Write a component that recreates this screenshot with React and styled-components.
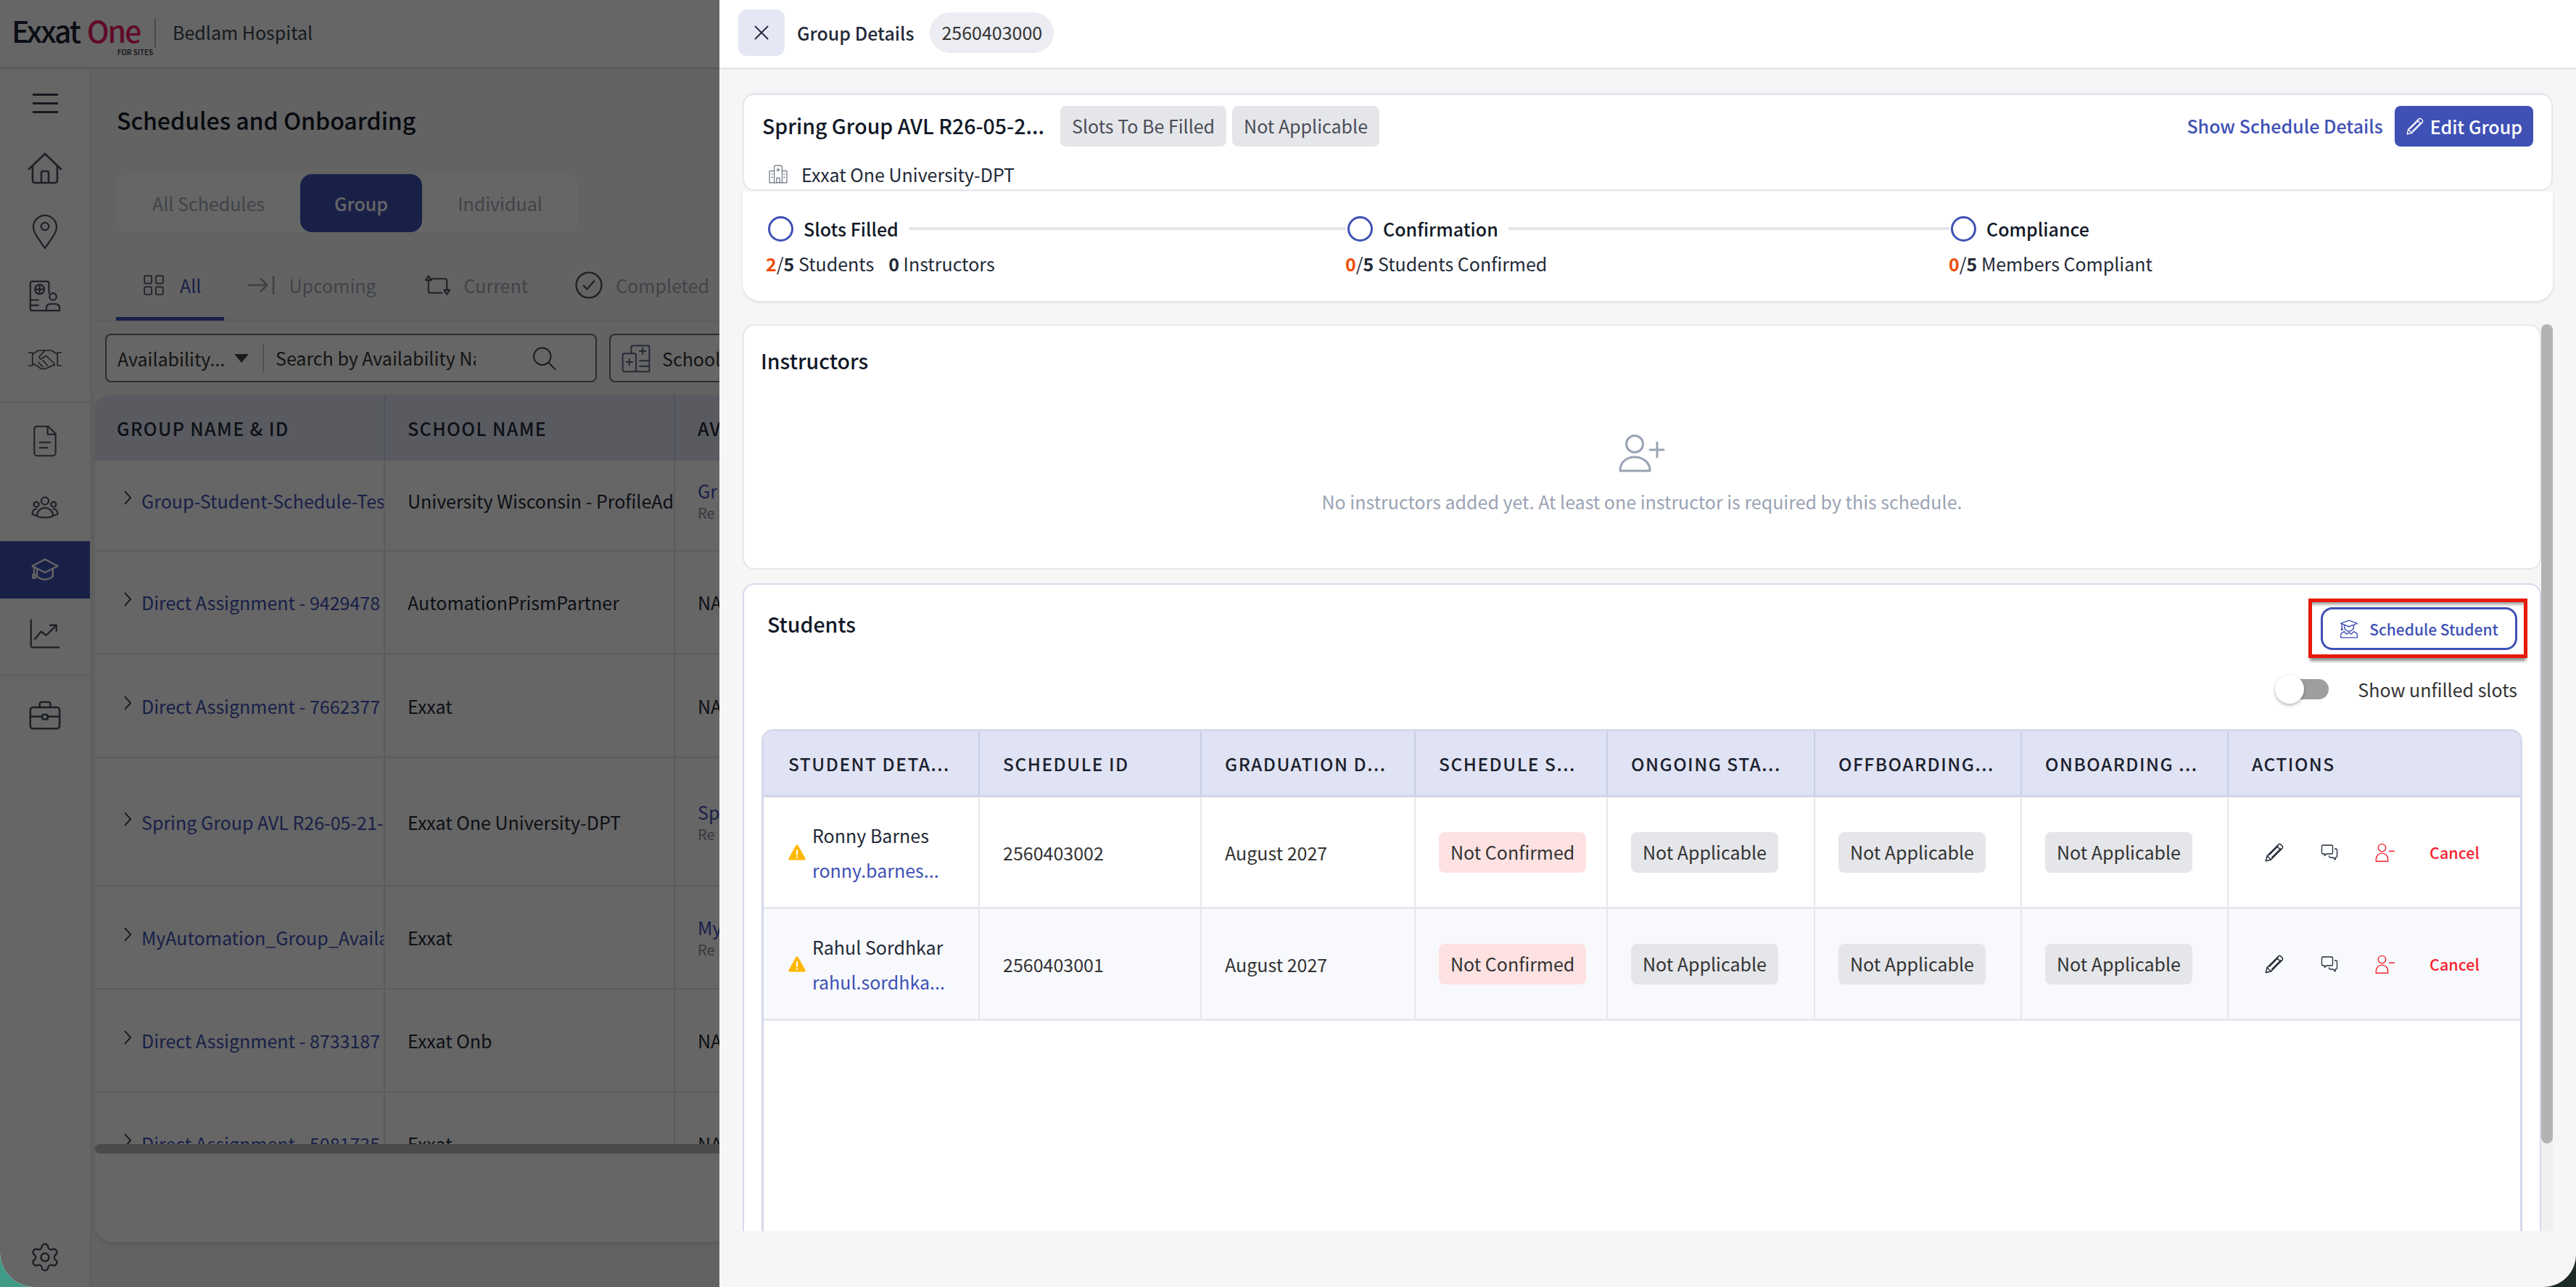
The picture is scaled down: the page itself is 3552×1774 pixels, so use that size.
import styled, { createGlobalStyle } from "styled-components";
import { X, Settings } from "lucide-react";

const font = `"Noto Sans CJK SC", "Source Sans Pro", "Noto Sans", sans-serif`;

const GlobalStyle = createGlobalStyle`
  html, body {
    margin: 0;
    padding: 0;
    background: linear-gradient(to right, #3f9a88 50%, #1c2a28 50%);
    font-family: ${font};
  }
  * { box-sizing: border-box; }
`;

const Line = ({ size = 48, h, vb = "0 0 24 24", color = "currentColor", sw = 1.4, fill = "none", children }) => (
  <svg width={size} height={h || size} viewBox={vb} fill={fill} stroke={color} strokeWidth={sw} strokeLinecap="round" strokeLinejoin="round">
    {children}
  </svg>
);

const HomeIcon = () => (
  <Line h={44} vb="0 0 24 22" sw={1.3}>
    <path d="M12 1 1 11.500M12 1l11 10.500" />
    <path d="M3.500 9.500V19.500a1.500 1.500 0 0 0 1.500 1.500h14a1.500 1.500 0 0 0 1.500-1.500V9.500" />
    <path d="M9.500 21v-7a1 1 0 0 1 1-1h3a1 1 0 0 1 1 1v7" />
  </Line>
);
const PinIcon = () => (
  <Line size={36} h={48} vb="0 0 18 24" sw={1.1}>
    <path d="M9 23C4 16 1 12 1 8.500a8 8 0 0 1 16 0C17 12 14 16 9 23z" />
    <circle cx="9" cy="8" r="2.600" />
  </Line>
);
const ClipboardIcon = () => (
  <Line h={44} sw={1.2}>
    <path d="M15 10V2.500A1.500 1.500 0 0 0 13.500 1H2.500A1.500 1.500 0 0 0 1 2.500v19A1.500 1.500 0 0 0 2.500 23H13" />
    <path d="M8 4.500v5M5.500 7h5" />
    <circle cx="8" cy="7" r="3.500" />
    <path d="M1 15h6M1 19h6" />
    <circle cx="18" cy="12.500" r="2.600" />
    <path d="M13 23v-2a3 3 0 0 1 3-3h4a3 3 0 0 1 3 3v2z" />
  </Line>
);
const HandshakeIcon = () => (
  <Line h={30} vb="0 0 32 20" sw={1.1}>
    <path d="M1 4h3.500v12H1M31 4h-3.500v12H31" />
    <path d="M4.500 5.500 10 2h6l-5.500 6 1.500 2 5-3 7.500 7v2M27.500 5.500 22 2h-6" />
    <path d="M4.500 14l4 2 4 3h3l3-1 5-2.500M10 13l4 4M14 11l4.500 5" />
  </Line>
);
const DocIcon = () => (
  <Line size={40} h={44} vb="0 0 20 24" sw={1.1}>
    <path d="M3.500 1h9L18 6.500V21a2 2 0 0 1-2 2H4a2 2 0 0 1-2-2V3a2 2 0 0 1 1.500-2z" />
    <path d="M12 1v6h6M6 13h8M6 17h6" />
  </Line>
);
const PeopleIcon = () => (
  <Line h={38} sw={1.4}>
    <circle cx="12" cy="6" r="3.200" />
    <circle cx="4.500" cy="9" r="2.200" />
    <circle cx="19.500" cy="9" r="2.200" />
    <path d="M5 19c0-4 3-7 7-7s7 3 7 7c-2 2-12 2-14 0z" />
    <path d="M4.500 13C2 13 1 15 1 17c0 1 2 1.500 4 1.500M19.500 13c2.500 0 3.500 2 3.500 4 0 1-2 1.500-4 1.500" />
  </Line>
);
const CapIcon = () => (
  <Line size={46} h={40} sw={1.4}>
    <path d="M12 3 1.500 8.500 12 14l10.500-5.500z" />
    <path d="M5.500 11v6c3 3.500 10 3.500 13 0v-6" />
    <path d="M3 9.500V15M2 15.500h2v3H2z" />
  </Line>
);
const ChartIcon = () => (
  <Line h={42} sw={1.3}>
    <path d="M1 1v20a1.500 1.500 0 0 0 1.500 1.500H23" />
    <path d="M4 16l5-6 4 3 8-8M16 5h5v4.500" />
  </Line>
);
const BriefcaseIcon = () => (
  <Line h={44} sw={1.4}>
    <rect x="1" y="6" width="22" height="16" rx="2" />
    <path d="M8 6V3.500A1.500 1.500 0 0 1 9.500 2h5A1.500 1.500 0 0 1 16 3.500V6M1 13h9M14 13h9" />
    <rect x="10" y="11.500" width="4" height="3.500" rx=".5" />
  </Line>
);
const GridIcon = () => (
  <Line size={28} color="#4b5563" sw={1.5}>
    <rect x="1" y="1" width="8.500" height="9" rx="1.500" />
    <rect x="14.500" y="1" width="8.500" height="9" rx="1.500" />
    <rect x="1" y="14" width="8.500" height="9" rx="1.500" />
    <rect x="14.500" y="14" width="8.500" height="9" rx="1.500" />
  </Line>
);
const UpcomingIcon = () => (
  <Line size={37} h={26} vb="0 0 38 26" sw={2.600} color="#9ca3af">
    <path d="M1 13h26M18 4l9 9-9 9M36 1v24" />
  </Line>
);
const CurrentIcon = () => (
  <Line size={39} h={42} vb="0 0 40 30" sw={2.200} color="#4b5563">
    <path d="M7 8v15a3 3 0 0 0 3 3h16M11 6h19a3 3 0 0 1 3 3v13" />
    <path d="M3 8l4-6 4 6zM29 22h8l-4 6z" />
  </Line>
);
const CheckCircleIcon = () => (
  <Line size={38} h={40} sw={1.500} color="#4b5563">
    <circle cx="12" cy="12" r="11" />
    <path d="M7.500 12.500l3 3 6-7" />
  </Line>
);
const SearchIcon = () => (
  <Line size={33} h={42} sw={1.400} color="#3a3f4b">
    <circle cx="10" cy="10" r="8.500" />
    <path d="M16 16l7 7" />
  </Line>
);
const SchoolIcon = () => (
  <Line size={40} h={46} sw={1.200} color="#5b6b85">
    <rect x="1" y="8" width="11" height="15" rx="1.500" />
    <path d="M4 15h5M6.500 12.500v5" />
    <path d="M8 8V3a1.500 1.500 0 0 1 1.500-1.500H23V23H12M15 6h5M17.500 3.500v5M15 14h8M15 18.500h8" />
  </Line>
);
const HospitalIcon = () => (
  <Line size={30} h={26} sw={1.100} color="#6b7280">
    <path d="M7 23V3a2 2 0 0 1 2-2h6a2 2 0 0 1 2 2v20" />
    <path d="M7 8H1v15h22V8h-6M10 23v-6h4v6M10 6.500h4M12 4.500v4" />
    <path d="M3.500 12H5M3.500 16H5M19 12h1.500M19 16h1.500" />
  </Line>
);
const PencilIcon = ({ size = 28 }) => (
  <Line size={size} sw={1.300}>
    <path d="M2 22l1.500-6L17 2.500a2 2 0 0 1 2.500 0l2 2a2 2 0 0 1 0 2.500L8 20.500z" />
    <path d="M15 4.500 19.500 9M3.500 16 8 20.500M6 15 16.500 4.500M9 18 19.500 7.500" />
  </Line>
);
const ChatIcon = () => (
  <Line size={28} h={24} sw={1.300}>
    <path d="M3 2h12a1.500 1.500 0 0 1 1.500 1.500v9A1.500 1.500 0 0 1 15 14H8l-2.500 2.500V14H3a1.500 1.500 0 0 1-1.500-1.500v-9A1.500 1.500 0 0 1 3 2z" />
    <path d="M19.500 7h1.500a1.500 1.500 0 0 1 1.500 1.500v9A1.500 1.500 0 0 1 21 19h-1v3l-3-3h-4a1.500 1.500 0 0 1-1.500-1.500V17" />
  </Line>
);
const UserMinusIcon = () => (
  <Line size={28} sw={1.200}>
    <circle cx="9" cy="6.500" r="4.500" />
    <path d="M2 22.500V20a7 7 0 0 1 14 0v2.500zM17.500 10.500h6" />
  </Line>
);
const UserPlusIcon = () => (
  <Line size={64} h={52} vb="0 0 64 52" sw={3}>
    <circle cx="22" cy="13" r="11.500" />
    <path d="M2 50v-1c0-10 8-18 20-18s21 8 21 18v1zM43 21h19M53 11v20" />
  </Line>
);
const StudentIcon = () => (
  <Line size={26} h={28} sw={1.300}>
    <path d="M12 1 1.500 5 12 9l10.500-4z" />
    <path d="M6 7.500V9a6 6 0 0 0 12 0V7.500M3 6v5M2 13l1-2 1 2z" />
    <path d="M1.500 23v-3.500C2 17 4 16 6 15.500l3 3 3-2 3 2 3-3c2 .5 4 1.500 4.500 4V23z" />
  </Line>
);
const WarnIcon = () => (
  <svg width="24" height="22" viewBox="0 0 24 22">
    <path d="M12 0.500c.8 0 1.300.4 1.700 1.100l9.800 17.600c.6 1.200 0 2.300-1.400 2.300H1.900c-1.400 0-2-1.100-1.400-2.300L10.300 1.600C10.700.9 11.200.5 12 .5z" fill="#ffb800" />
    <rect x="11" y="7" width="2" height="8" fill="#fff" />
    <rect x="11" y="16.500" width="2" height="2.200" fill="#fff" />
  </svg>
);

const Screen = styled.div`
  position: relative;
  width: 3552px;
  height: 1774px;
  overflow: hidden;
  border-radius: 0 0 45px 48px;
  background: #f7f7f8;
  color: #1a1f2e;
  font-size: 25px;
`;

const Backdrop = styled.div`
  position: absolute;
  inset: 0;
  background: rgba(0, 0, 0, 0.6);
`;

const TopBar = styled.div`
  display: flex;
  align-items: center;
  height: 96px;
  padding-left: 16px;
  background: #fff;
  border-bottom: 4px solid #e6e6ea;
`;

const Logo = styled.div`
  position: relative;
  display: flex;
  align-items: baseline;
  width: 197px;
  font-size: 41px;
  letter-spacing: -2.200px;
  font-weight: 500;
  line-height: 1;
  color: #1a2430;
  margin-bottom: 10px;
`;

const LogoAccent = styled.span`
  color: #f01a6a;
  margin-left: 10px;
`;

const LogoSub = styled.span`
  position: absolute;
  right: 2px;
  bottom: -15px;
  font-size: 10px;
  letter-spacing: 0;
`;

const OrgName = styled.div`
  height: 40px;
  line-height: 36px;
  padding-left: 23px;
  border-left: 2px solid #b8bac2;
  color: #374151;
`;

const Body = styled.div`
  display: flex;
  height: 1678px;
`;

const Sidebar = styled.nav`
  display: flex;
  flex-direction: column;
  align-items: center;
  width: 128px;
  padding-top: 33px;
  border-right: 4px solid #efeff2;
  background: #fff;
  color: #4a5060;
`;

const Burger = styled.div`
  display: flex;
  flex-direction: column;
  justify-content: space-between;
  width: 35px;
  height: 27px;
  margin-bottom: 33px;
`;

const BurgerBar = styled.span`
  height: 3px;
  background: #3a4050;
`;

const NavItem = styled.div`
  display: flex;
  flex: none;
  align-items: center;
  justify-content: center;
  width: 124px;
  height: ${(p) => p.$h}px;
  margin-top: ${(p) => p.$mt || 0}px;
  background: ${(p) => (p.$active ? "#3f51b5" : "transparent")};
  color: ${(p) => (p.$active ? "#fff" : "inherit")};
`;

const NavDivider = styled.div`
  flex: none;
  width: 124px;
  height: 2px;
  margin-top: ${(p) => p.$mt}px;
  background: #e9e9ed;
`;

const NavSpacer = styled.div`
  flex: 1;
`;

const Main = styled.main`
  flex: 1;
  min-width: 0;
  padding: 0 0 0 3px;
`;

const PageTitle = styled.h1`
  margin: 0;
  padding: 42px 0 0 30px;
  font-size: 32px;
  line-height: 54px;
  font-weight: 500;
  color: #111827;
`;

const SegmentBar = styled.div`
  display: flex;
  width: 636px;
  height: 80px;
  margin: 48px 0 0 30px;
  border-radius: 16px;
  background: #fff;
`;

const Segment = styled.div`
  display: flex;
  align-items: center;
  justify-content: center;
  width: ${(p) => p.$w}px;
  border-radius: 16px;
  background: ${(p) => (p.$active ? "#3f51b5" : "transparent")};
  color: ${(p) => (p.$active ? "#fff" : "#a3a9b5")};
  font-weight: ${(p) => (p.$active ? 500 : 400)};
`;

const TabRow = styled.div`
  display: flex;
  height: 100px;
  margin-top: 24px;
  padding-left: 29px;
  border-bottom: 4px solid #eeeef1;
`;

const Tab = styled.div`
  display: flex;
  align-items: center;
  gap: ${(p) => p.$gap || 19}px;
  height: 98px;
  padding: 0 ${(p) => (p.$active ? 32 : 0)}px 0 ${(p) => (p.$active ? 38 : 0)}px;
  margin-right: ${(p) => p.$mr || 0}px;
  box-shadow: ${(p) => (p.$active ? "inset 0 -5px 0 #3f51b5" : "none")};
  color: ${(p) => (p.$active ? "#3f51b5" : "#a3a9b5")};
`;

const FilterRow = styled.div`
  display: flex;
  gap: 17px;
  margin: 16px 0 0 14px;
`;

const SearchBox = styled.div`
  display: flex;
  align-items: center;
  flex: none;
  width: 678px;
  height: 67px;
  padding: 0 15px;
  border: 2px solid #6b7280;
  border-radius: 8px;
  background: #fff;
  color: #333;
`;

const FilterLabel = styled.span`
  width: 161px;
  flex: none;
  white-space: nowrap;
`;

const Caret = styled.span`
  width: 0;
  height: 0;
  flex: none;
  border-left: 10px solid transparent;
  border-right: 10px solid transparent;
  border-top: 12px solid #444;
`;

const SearchField = styled.span`
  width: 294px;
  flex: none;
  margin: 0 78px 0 19px;
  padding-left: 16px;
  height: 40px;
  line-height: 38px;
  border-left: 2px solid #c9c9ce;
  overflow: hidden;
  white-space: nowrap;
`;

const SchoolBox = styled(SearchBox)`
  width: 400px;
  gap: 16px;
`;

const ListCard = styled.div`
  width: 1500px;
  height: 1167px;
  margin-top: 18px;
  border-radius: 0 0 24px 24px;
  background: #fff;
  box-shadow: 0 2px 6px rgba(0, 0, 0, 0.12);
  overflow: hidden;
`;

const ListScroll = styled.div`
  position: relative;
  height: 1045px;
  overflow: hidden;
`;

const LIST_COLS = "398px 400px 1fr";

const ListHead = styled.div`
  display: grid;
  grid-template-columns: ${LIST_COLS};
  height: 90px;
  background: #e0e3f3;
  border-radius: 16px 16px 0 0;
`;

const ListHeadCell = styled.div`
  display: flex;
  align-items: center;
  padding-left: ${(p) => p.$pl || 31}px;
  letter-spacing: 1.400px;
  font-weight: 500;
  color: #1f2937;
  white-space: nowrap;
  border-left: ${(p) => (p.$first ? "none" : "2px solid #c9cee6")};
`;

const ListRowWrap = styled.div`
  display: grid;
  grid-template-columns: ${LIST_COLS};
  height: ${(p) => p.$h}px;
  border-bottom: 2px solid #e6e7ec;
  background: #fff;
`;

const ListCell = styled.div`
  display: flex;
  flex-direction: column;
  justify-content: center;
  padding: 0 0 ${(p) => p.$pb || 0}px 31px;
  white-space: nowrap;
  overflow: hidden;
  color: #1f2937;
  border-left: ${(p) => (p.$first ? "none" : "2px solid #e6e7ec")};
`;

const GroupCell = styled(ListCell)`
  flex-direction: row;
  justify-content: flex-start;
  align-items: center;
  gap: 13px;
  padding-left: 39px;
  color: #3f51b5;
`;

const Sub = styled.span`
  color: #8a8f9c;
  font-size: 20px;
  line-height: 28px;
`;

const CellLink = styled.span`
  color: #3f51b5;
  line-height: 34px;
`;

const Chevron = () => (
  <svg width="12" height="22" viewBox="0 0 12 22" fill="none" stroke="#1f2937" strokeWidth="1.800" style={{ flex: "none", marginTop: -8 }}>
    <path d="M2 2l8 9-8 9" />
  </svg>
);

const HScroll = styled.div`
  position: relative;
  height: 13px;
  margin-top: -13px;
  border-radius: 6px;
  background: #b8b8b8;
`;

const Drawer = styled.aside`
  position: absolute;
  top: 0;
  right: 0;
  bottom: 0;
  display: flex;
  flex-direction: column;
  width: 2560px;
  background: #f6f6f7;
`;

const DrawerHead = styled.header`
  display: flex;
  align-items: center;
  flex: none;
  height: 96px;
  padding: 0 0 3px 26px;
  background: #fff;
  border-bottom: 3px solid #e6e6ee;
`;

const CloseBtn = styled.button`
  display: flex;
  align-items: center;
  justify-content: center;
  width: 64px;
  height: 64px;
  margin-right: 17px;
  padding: 0;
  border: none;
  border-radius: 12px;
  background: #e5e7f5;
  color: #1f2937;
`;

const DrawerTitle = styled.span`
  font-weight: 500;
  color: #1f2937;
`;

const IdPill = styled.span`
  margin-left: 22px;
  padding: 0 16px;
  height: 56px;
  line-height: 54px;
  border-radius: 28px;
  background: #ecedf2;
  color: #333;
`;

const DrawerBody = styled.div`
  padding: 32px 32px 0;
`;

const SummaryCard = styled.section`
  display: flex;
  flex-direction: column;
  height: 135px;
  padding: 15px 25px 0 25px;
  background: #fff;
  border: 2px solid #e6e6ee;
  border-top-width: 3px;
  border-radius: 16px;
`;

const SummaryTop = styled.div`
  display: flex;
  align-items: center;
  height: 56px;
`;

const GroupName = styled.span`
  width: 395px;
  margin: -3px 16px 0 0;
  font-size: 28.500px;
  font-weight: 500;
  white-space: nowrap;
  color: #111827;
`;

const StatusTag = styled.span`
  display: inline-flex;
  align-items: center;
  justify-content: center;
  height: 56px;
  padding: 0 16px 2px;
  margin-right: ${(p) => p.$mr || 0}px;
  border-radius: 8px;
  background: ${(p) => (p.$danger ? "#fee2e2" : "#e5e6ea")};
  color: ${(p) => (p.$muted ? "#4a4d57" : "#333")};
  white-space: nowrap;
`;

const Spacer = styled.div`
  flex: 1;
`;

const LinkButton = styled.span`
  margin: -3px 16px 0 0;
  color: #3f51b5;
  font-weight: 500;
`;

const EditButton = styled.button`
  display: flex;
  align-items: center;
  gap: 8px;
  height: 56px;
  padding: 0 15px;
  border: none;
  border-radius: 8px;
  background: #3f51b5;
  color: #fff;
  font: 500 25px ${font};
`;

const SiteRow = styled.div`
  display: flex;
  align-items: center;
  gap: 17px;
  height: 40px;
  margin-top: 18px;
  padding-left: 7px;
  color: #1f2937;
`;

const StepsCard = styled.section`
  display: grid;
  grid-template-columns: 799px 832px 1fr;
  height: 151px;
  margin-top: 1px;
  padding: 33px 0 0 35px;
  background: #fff;
  border-radius: 0 0 24px 24px;
  box-shadow: 0 2px 4px rgba(0, 0, 0, 0.1);
`;

const Step = styled.div`
  display: flex;
  flex-direction: column;
`;

const StepHead = styled.div`
  display: flex;
  align-items: center;
  gap: 14px;
  height: 36px;
`;

const StepDot = styled.span`
  flex: none;
  width: 35px;
  height: 35px;
  border: 3px solid #3f51b5;
  border-radius: 50%;
`;

const StepName = styled.span`
  font-weight: 500;
  color: #111827;
`;

const StepLine = styled.span`
  flex: 1;
  height: 4px;
  background: #e5e6ea;
  margin-right: 2px;
`;

const StepMeta = styled.div`
  margin: 12px 0 0 -3px;
  line-height: 36px;
  color: #1f2937;
`;

const Count = styled.b`
  font-weight: 700;
  color: ${(p) => (p.$alert ? "#f04e0c" : "inherit")};
`;

const StepMetaGap = styled.span`
  margin-left: 20px;
`;

const ScrollArea = styled.div`
  position: relative;
  margin-top: 32px;
  padding-right: 16px;
  height: 1250px;
  overflow: hidden;
`;

const ScrollTrack = styled.div`
  position: absolute;
  top: 0;
  right: 0;
  bottom: 0;
  width: 16px;
  background: #f1eff1;
`;

const ScrollThumb = styled.div`
  height: 1129px;
  border-radius: 8px;
  background: #b3b3b3;
`;

const InstructorsCard = styled.section`
  height: 338px;
  padding: 26px 23px 0;
  background: #fff;
  border: 2px solid #e6e6ee;
  border-radius: 16px;
`;

const CardTitle = styled.h2`
  margin: 0;
  font-size: 28.500px;
  line-height: 44px;
  font-weight: 500;
  color: #111827;
`;

const EmptyState = styled.div`
  display: flex;
  flex-direction: column;
  align-items: center;
  margin-top: 80px;
  color: #9aa3b4;
`;

const EmptyText = styled.p`
  margin: 20px 0 0;
  line-height: 40px;
`;

const StudentsCard = styled.section`
  height: 900px;
  margin-top: 19px;
  padding: 0 24px;
  background: #fff;
  border: 2px solid #d5d9ec;
  border-bottom: none;
  border-radius: 16px 16px 0 0;
`;

const StudentsHead = styled.div`
  display: flex;
  align-items: flex-start;
  justify-content: space-between;
  height: 119px;
  padding: 32px 0 0 8px;
`;

const ActionMark = styled.div`
  margin: -13px -7px 0 0;
  padding: 7px 9px 6px 12px;
  border: 5px solid #e8190a;
  box-shadow: 0 6px 4px -2px rgba(0, 0, 0, 0.45), inset 0 6px 4px -3px rgba(0, 0, 0, 0.4);
`;

const OutlineButton = styled.button`
  display: flex;
  align-items: center;
  justify-content: center;
  gap: 15px;
  width: 271px;
  height: 59px;
  padding: 0;
  border: 3px solid #3f51b5;
  border-radius: 16px;
  background: #fff;
  color: #3f51b5;
  font: 500 21px ${font};
`;

const ToggleRow = styled.div`
  display: flex;
  align-items: center;
  justify-content: flex-end;
  gap: 40px;
  height: 50px;
  padding-right: 7px;
  color: #333;
`;

const Toggle = styled.div`
  position: relative;
  width: 60px;
  height: 28px;
  border-radius: 14px;
  background: #9e9e9e;
`;

const Knob = styled.span`
  position: absolute;
  left: -14px;
  top: -6px;
  width: 40px;
  height: 40px;
  border-radius: 50%;
  background: #fff;
  box-shadow: 0 2px 4px rgba(0, 0, 0, 0.3);
`;

const Table = styled.div`
  margin-top: 30px;
  height: 720px;
  border: 3px solid #d5d9ec;
  border-bottom: none;
  border-radius: 16px 16px 0 0;
  overflow: hidden;
`;

const COLS = "296px 306px 295px 265px 286px 285px 285px 1fr";

const HeadRow = styled.div`
  display: grid;
  grid-template-columns: ${COLS};
  height: 91px;
  background: #e0e3f3;
  border-bottom: 3px solid #d0d4e6;
`;

const HeadCell = styled.div`
  display: flex;
  align-items: center;
  padding-left: ${(p) => (p.$first ? 34 : 32)}px;
  letter-spacing: 1.500px;
  font-size: 24.500px;
  font-weight: 500;
  color: #1a1f2e;
  border-left: ${(p) => (p.$first ? "none" : "2px solid #c9cee6")};
  white-space: nowrap;
`;

const BodyRow = styled.div`
  display: grid;
  grid-template-columns: ${COLS};
  height: 154px;
  background: ${(p) => (p.$alt ? "#f8f9fc" : "#fff")};
  border-bottom: 3px solid #e6e7ee;
`;

const BodyCell = styled.div`
  display: flex;
  align-items: center;
  padding-left: ${(p) => (p.$first ? 34 : 32)}px;
  color: #333;
  border-left: ${(p) => (p.$first ? "none" : "2px solid #e6e7ee")};
`;

const StudentCell = styled(BodyCell)`
  gap: 9px;
`;

const StudentName = styled.div`
  line-height: 48px;
  color: #1f2937;
`;

const StudentEmail = styled.div`
  line-height: 48px;
  color: #3f51b5;
`;

const Actions = styled(BodyCell)`
  padding-left: 49px;
  gap: 48px;
  color: #1f2937;
`;

const Danger = styled.span`
  display: flex;
  color: #f5222d;
`;

const CancelText = styled.span`
  color: #f5222d;
  font-size: 21.500px;
  font-weight: 500;
`;

const listRows = [
  { name: "Group-Student-Schedule-Tes", school: "University Wisconsin - ProfileAd", third: "Gr", sub: "Re", h: 125, pb: 14 },
  { name: "Direct Assignment - 9429478", school: "AutomationPrismPartner", third: "NA", h: 142 },
  { name: "Direct Assignment - 7662377", school: "Exxat", third: "NA", h: 143 },
  { name: "Spring Group AVL R26-05-21-", school: "Exxat One University-DPT", third: "Sp", sub: "Re", h: 177 },
  { name: "MyAutomation_Group_Availa", school: "Exxat", third: "My", sub: "Re", h: 142 },
  { name: "Direct Assignment - 8733187", school: "Exxat Onb", third: "NA", h: 142 },
  { name: "Direct Assignment - 5081735", school: "Exxat", third: "NA", h: 142 },
];

const students = [
  { name: "Ronny Barnes", email: "ronny.barnes...", id: "2560403002" },
  { name: "Rahul Sordhkar", email: "rahul.sordhka...", id: "2560403001" },
];

const columns = ["STUDENT DETA...", "SCHEDULE ID", "GRADUATION D...", "SCHEDULE S...", "ONGOING STA...", "OFFBOARDING...", "ONBOARDING ...", "ACTIONS"];

export default function App() {
  return (
    <Screen>
      <GlobalStyle />
      <TopBar>
        <Logo>
          Exxat<LogoAccent>One</LogoAccent>
          <LogoSub>FOR SITES</LogoSub>
        </Logo>
        <OrgName>Bedlam Hospital</OrgName>
      </TopBar>
      <Body>
        <Sidebar>
          <Burger>
            <BurgerBar />
            <BurgerBar />
            <BurgerBar />
          </Burger>
          <NavItem $h={86}><HomeIcon /></NavItem>
          <NavItem $h={90}><PinIcon /></NavItem>
          <NavItem $h={86}><ClipboardIcon /></NavItem>
          <NavItem $h={88}><HandshakeIcon /></NavItem>
          <NavDivider $mt={14} />
          <NavItem $h={106}><DocIcon /></NavItem>
          <NavItem $h={78}><PeopleIcon /></NavItem>
          <NavItem $h={79} $mt={7} $active><CapIcon /></NavItem>
          <NavItem $h={98}><ChartIcon /></NavItem>
          <NavDivider $mt={7} />
          <NavItem $h={108}><BriefcaseIcon /></NavItem>
          <NavSpacer />
          <NavItem $h={82}><Settings size={44} strokeWidth={1.300} /></NavItem>
        </Sidebar>
        <Main>
          <PageTitle>Schedules and Onboarding</PageTitle>
          <SegmentBar>
            <Segment $w={253}>All Schedules</Segment>
            <Segment $w={168} $active>Group</Segment>
            <Segment $w={215}>Individual</Segment>
          </SegmentBar>
          <TabRow>
            <Tab $active $gap={22} $mr={33}><GridIcon />All</Tab>
            <Tab $mr={65}><UpcomingIcon />Upcoming</Tab>
            <Tab $gap={17} $mr={65}><CurrentIcon />Current</Tab>
            <Tab $gap={18}><CheckCircleIcon />Completed</Tab>
          </TabRow>
          <FilterRow>
            <SearchBox>
              <FilterLabel>Availability...</FilterLabel>
              <Caret />
              <SearchField>Search by Availability Name</SearchField>
              <SearchIcon />
            </SearchBox>
            <SchoolBox>
              <SchoolIcon />
              School
            </SchoolBox>
          </FilterRow>
          <ListCard>
            <ListScroll>
              <ListHead>
                <ListHeadCell $first $pl={30}>GROUP NAME &amp; ID</ListHeadCell>
                <ListHeadCell>SCHOOL NAME</ListHeadCell>
                <ListHeadCell>AV</ListHeadCell>
              </ListHead>
              {listRows.map((r) => (
                <ListRowWrap key={r.name} $h={r.h}>
                  <GroupCell $first $pb={r.pb}>
                    <Chevron />
                    {r.name}
                  </GroupCell>
                  <ListCell $pb={r.pb}>{r.school}</ListCell>
                  <ListCell $pb={r.pb}>
                    {r.sub ? <CellLink>{r.third}</CellLink> : r.third}
                    {r.sub && <Sub>{r.sub}</Sub>}
                  </ListCell>
                </ListRowWrap>
              ))}
            </ListScroll>
            <HScroll />
          </ListCard>
        </Main>
      </Body>
      <Backdrop />
      <Drawer>
        <DrawerHead>
          <CloseBtn aria-label="Close"><X size={34} strokeWidth={1.300} /></CloseBtn>
          <DrawerTitle>Group Details</DrawerTitle>
          <IdPill>2560403000</IdPill>
        </DrawerHead>
        <DrawerBody>
          <SummaryCard>
            <SummaryTop>
              <GroupName>Spring Group AVL R26-05-2...</GroupName>
              <StatusTag $mr={8} $muted>Slots To Be Filled</StatusTag>
              <StatusTag $muted>Not Applicable</StatusTag>
              <Spacer />
              <LinkButton>Show Schedule Details</LinkButton>
              <EditButton><PencilIcon size={26} />Edit Group</EditButton>
            </SummaryTop>
            <SiteRow>
              <HospitalIcon />
              Exxat One University-DPT
            </SiteRow>
          </SummaryCard>
          <StepsCard>
            <Step>
              <StepHead>
                <StepDot />
                <StepName>Slots Filled</StepName>
                <StepLine />
              </StepHead>
              <StepMeta>
                <Count $alert>2</Count>/<Count>5</Count> Students
                <StepMetaGap><Count>0</Count> Instructors</StepMetaGap>
              </StepMeta>
            </Step>
            <Step>
              <StepHead>
                <StepDot />
                <StepName>Confirmation</StepName>
                <StepLine />
              </StepHead>
              <StepMeta><Count $alert>0</Count>/<Count>5</Count> Students Confirmed</StepMeta>
            </Step>
            <Step>
              <StepHead>
                <StepDot />
                <StepName>Compliance</StepName>
              </StepHead>
              <StepMeta><Count $alert>0</Count>/<Count>5</Count> Members Compliant</StepMeta>
            </Step>
          </StepsCard>
          <ScrollArea>
            <ScrollTrack><ScrollThumb /></ScrollTrack>
            <InstructorsCard>
              <CardTitle>Instructors</CardTitle>
              <EmptyState>
                <UserPlusIcon />
                <EmptyText>No instructors added yet. At least one instructor is required by this schedule.</EmptyText>
              </EmptyState>
            </InstructorsCard>
            <StudentsCard>
              <StudentsHead>
                <CardTitle>Students</CardTitle>
                <ActionMark>
                  <OutlineButton><StudentIcon />Schedule Student</OutlineButton>
                </ActionMark>
              </StudentsHead>
              <ToggleRow>
                <Toggle><Knob /></Toggle>
                Show unfilled slots
              </ToggleRow>
              <Table>
                <HeadRow>
                  {columns.map((c, i) => (
                    <HeadCell key={c} $first={i === 0}>{c}</HeadCell>
                  ))}
                </HeadRow>
                {students.map((s, i) => (
                  <BodyRow key={s.id} $alt={i === 1}>
                    <StudentCell $first>
                      <WarnIcon />
                      <div>
                        <StudentName>{s.name}</StudentName>
                        <StudentEmail>{s.email}</StudentEmail>
                      </div>
                    </StudentCell>
                    <BodyCell>{s.id}</BodyCell>
                    <BodyCell>August 2027</BodyCell>
                    <BodyCell><StatusTag $danger>Not Confirmed</StatusTag></BodyCell>
                    <BodyCell><StatusTag>Not Applicable</StatusTag></BodyCell>
                    <BodyCell><StatusTag>Not Applicable</StatusTag></BodyCell>
                    <BodyCell><StatusTag>Not Applicable</StatusTag></BodyCell>
                    <Actions>
                      <PencilIcon />
                      <ChatIcon />
                      <Danger><UserMinusIcon /></Danger>
                      <CancelText>Cancel</CancelText>
                    </Actions>
                  </BodyRow>
                ))}
              </Table>
            </StudentsCard>
          </ScrollArea>
        </DrawerBody>
      </Drawer>
    </Screen>
  );
}
